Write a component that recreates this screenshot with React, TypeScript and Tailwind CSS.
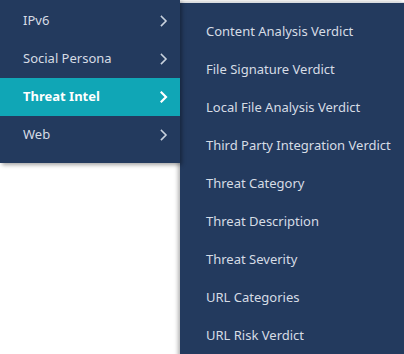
import React from "react";

const left = ["IPv6", "Social Persona", "Threat Intel", "Web"];
const sub = [
  "Content Analysis Verdict",
  "File Signature Verdict",
  "Local File Analysis Verdict",
  "Third Party Integration Verdict",
  "Threat Category",
  "Threat Description",
  "Threat Severity",
  "URL Categories",
  "URL Risk Verdict",
];

function Chevron({ bold }: { bold?: boolean }) {
  return (
    <svg width="8" height="12" viewBox="0 0 8 12" className="shrink-0">
      <path
        d="M1.5 1.5 L6 6 L1.5 10.5"
        fill="none"
        stroke={bold ? "#ffffff" : "#c9d2de"}
        strokeWidth={bold ? 2.2 : 1.6}
        strokeLinecap="square"
      />
    </svg>
  );
}

export default function App() {
  return (
    <div
      className="relative w-[404px] h-[354px] overflow-hidden bg-white"
      style={{ fontFamily: '"Noto Sans", "Open Sans", sans-serif' }}
    >
      <div className="flex items-start">
        <div className="relative z-10 w-[180px] shrink-0 bg-[#233a5e] pt-[2px] pb-[9px] shadow-[2px_2px_4px_rgba(0,0,0,0.35)]">
          {left.map((l) => {
            const active = l === "Threat Intel";
            return (
              <div
                key={l}
                className={`flex h-[38px] items-center justify-between pl-[23px] pr-[12px] text-[13px] ${
                  active ? "bg-[#10a6b6] font-bold text-white" : "font-normal text-[#d6dce5]"
                }`}
              >
                <span>{l}</span>
                <Chevron bold={active} />
              </div>
            );
          })}
        </div>
        <div className="mt-[2px] h-[400px] flex-1 border-t border-[#d9dce0] bg-[#233a5e] pt-[10px] shadow-[-2px_0_4px_rgba(0,0,0,0.3)]">
          {sub.map((s) => (
            <div
              key={s}
              className="flex h-[38px] items-center pl-[26px] text-[13px] font-normal text-[#d6dce5]"
            >
              {s}
            </div>
          ))}
        </div>
      </div>
    </div>
  );
}
